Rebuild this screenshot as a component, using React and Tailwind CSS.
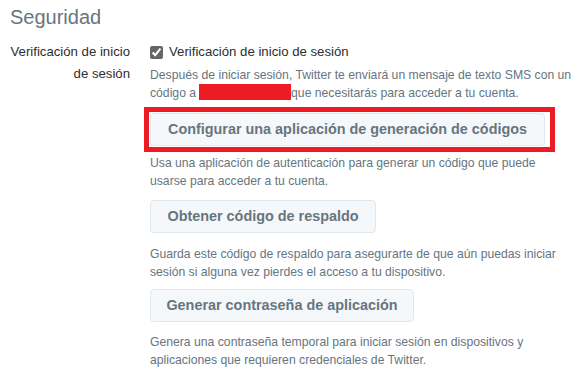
export default function App() {
  const btn =
    "h-[33px] px-0 whitespace-nowrap rounded-[4px] border border-[#e1e8ed] bg-[#f5f8fa] text-[14.4px] font-bold text-[#66757f] leading-none";
  const desc = "text-[12.2px] leading-[18px] text-[#66757f]";
  return (
    <div className="w-[581px] h-[376px] bg-white font-['Liberation_Sans',Arial,sans-serif] overflow-hidden">
      <h2 className="pl-[10px] pt-[4px] text-[20px] leading-[26px] text-[#66757f]">Seguridad</h2>
      <div className="flex mt-[11px]">
        <div className="w-[130px] text-right text-[13.2px] leading-[22px] text-[#292f33]">
          Verificación de inicio de sesión
        </div>
        <div className="ml-[20px] flex-1 pr-[6px]">
          <label className="flex items-center gap-[6px] text-[13.2px] leading-[22px] text-[#292f33]">
            <input type="checkbox" defaultChecked className="w-[13px] h-[13px] m-0 accent-[#666]" />
            Verificación de inicio de sesión
          </label>
          <p className={`${desc} mt-[3px]`}>
            Después de iniciar sesión, Twitter te enviará un mensaje de texto SMS con un código a
            <span className="inline-block align-[-3px] ml-[3px] w-[92px] h-[16px] bg-[#ed1c24]" />
            que necesitarás para acceder a tu cuenta.
          </p>
          <div className="mt-[5px] -ml-[6px] w-[411px] border-[5px] border-[#ed1c24] px-[1px] pt-[1px] pb-[1px]">
            <button className={`${btn} w-[395px]`}>Configurar una aplicación de generación de códigos</button>
          </div>
          <p className={`${desc} mt-[2px]`}>
            Usa una aplicación de autenticación para generar un código que puede usarse para acceder a tu cuenta.
          </p>
          <button className={`${btn} mt-[10px] w-[226px]`}>Obtener código de respaldo</button>
          <p className={`${desc} mt-[12px]`}>
            Guarda este código de respaldo para asegurarte de que aún puedas iniciar sesión si alguna vez pierdes el acceso a tu dispositivo.
          </p>
          <button className={`${btn} mt-[8px] w-[264px]`}>Generar contraseña de aplicación</button>
          <p className={`${desc} mt-[11px]`}>
            Genera una contraseña temporal para iniciar sesión en dispositivos y aplicaciones que requieren credenciales de Twitter.
          </p>
        </div>
      </div>
    </div>
  );
}
